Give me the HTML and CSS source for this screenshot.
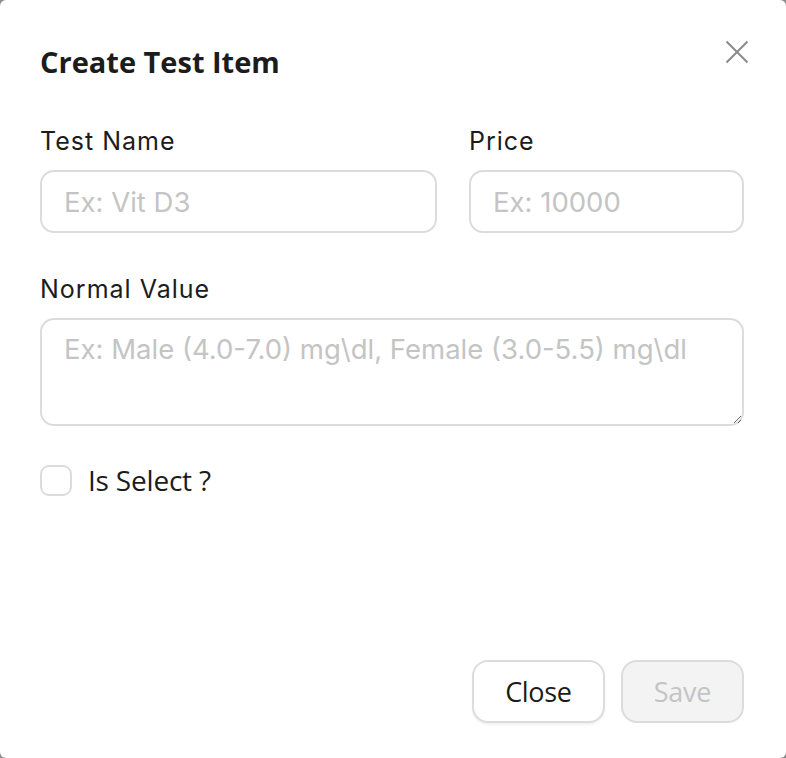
FILE: index.html
```html
<!DOCTYPE html>
<html>
<head>
<meta charset="utf-8">
<link rel="stylesheet" href="styles.css">
</head>
<body>
<div class="modal">
  <div class="header">
    <h1 class="title">Create Test Item</h1>
    <button class="x-btn" aria-label="Close">
      <svg width="24" height="24" viewBox="0 0 24 24"><path d="M1.5 1.5 L22.5 22.5 M22.5 1.5 L1.5 22.5" stroke="#8a8a8a" stroke-width="2" fill="none"/></svg>
    </button>
  </div>
  <div class="row">
    <div class="field grow">
      <label class="label">Test Name</label>
      <input class="input" placeholder="Ex: Vit D3">
    </div>
    <div class="field price">
      <label class="label">Price</label>
      <input class="input" placeholder="Ex: 10000">
    </div>
  </div>
  <div class="field">
    <label class="label">Normal Value</label>
    <textarea class="input area" placeholder="Ex: Male (4.0-7.0) mg\dl, Female (3.0-5.5) mg\dl"></textarea>
  </div>
  <label class="check">
    <span class="box"></span>
    <span class="check-text">Is Select ?</span>
  </label>
  <div class="spacer"></div>
  <div class="footer">
    <button class="btn">Close</button>
    <button class="btn disabled" disabled>Save</button>
  </div>
</div>
</body>
</html>
```
FILE: styles.css
```css
html, body {
  margin: 0;
  padding: 0;
  height: 100%;
  background: #8c8c8c;
}
.modal {
  box-sizing: border-box;
  width: 786px;
  height: 758px;
  background: #fff;
  border-radius: 6px;
  padding: 0 42px 35px 40px;
  display: flex;
  flex-direction: column;
  font-family: "Inter", sans-serif;
}
.header {
  display: flex;
  justify-content: space-between;
  align-items: flex-start;
  height: 126px;
}
.title {
  margin: 43px 0 0 0;
  font-family: "Open Sans", sans-serif;
  font-weight: 700;
  font-size: 29px;
  letter-spacing: 0;
  color: #1c1c1c;
  line-height: 38px;
}
.x-btn {
  margin: 40px -5px 0 0;
  padding: 0;
  border: none;
  background: none;
  width: 24px;
  height: 24px;
  display: block;
}
.x-btn svg { display: block; }
.row {
  display: flex;
  gap: 32px;
}
.grow { flex: 1; }
.price { width: 275px; }
.field {
  display: flex;
  flex-direction: column;
}
.label {
  font-size: 25px;
  color: #1c1c1c;
  line-height: 30px;
  margin-bottom: 14px;
  letter-spacing: 1px;
}
.input {
  box-sizing: border-box;
  height: 63px;
  border: 2px solid #dcdcdc;
  border-radius: 14px;
  padding: 0 22px;
  font-family: "Inter", sans-serif;
  font-size: 27.5px;
  color: #1c1c1c;
  outline: none;
  background: #fff;
  width: 100%;
  margin-bottom: 41px;
}
.input::placeholder { color: #c4c4c4; }
.area {
  height: 108px;
  padding: 12px 22px;
  resize: vertical;
  margin-bottom: 35px;
}
.check {
  display: flex;
  align-items: center;
  gap: 16px;
}
.box {
  box-sizing: border-box;
  width: 32px;
  height: 31px;
  border: 2px solid #dcdcdc;
  border-radius: 9px;
}
.check-text {
  font-family: "Open Sans", sans-serif;
  font-size: 28px;
  color: #1c1c1c;
  letter-spacing: -0.2px;
}
.spacer { flex: 1; }
.footer {
  display: flex;
  justify-content: flex-end;
  gap: 16px;
}
.btn {
  box-sizing: border-box;
  height: 63px;
  border: 2px solid #dcdcdc;
  border-radius: 16px;
  background: #fff;
  font-family: "Open Sans", sans-serif;
  font-size: 27px;
  letter-spacing: -0.3px;
  color: #1c1c1c;
  padding: 0 31px;
  box-shadow: 0 2px 2px rgba(0,0,0,0.05);
}
.btn.disabled {
  background: #f3f3f3;
  color: #c4c4c4;
  box-shadow: none;
}
```
